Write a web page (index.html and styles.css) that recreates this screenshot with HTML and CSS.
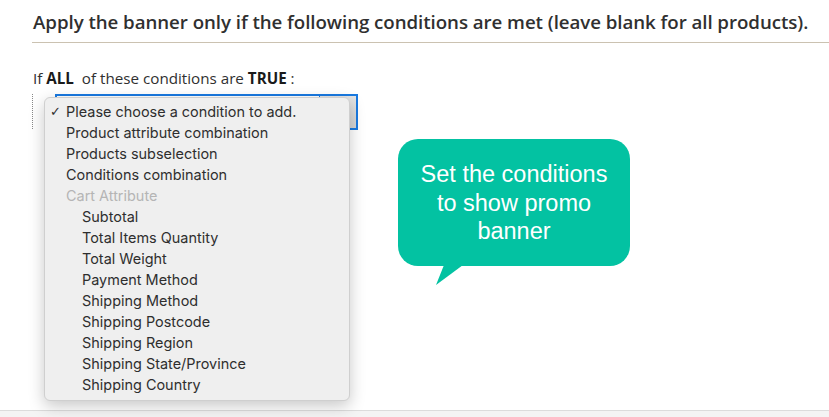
FILE: index.html
```html
<!DOCTYPE html>
<html lang="en">
<head>
    <meta charset="UTF-8">
    <title>Banner Conditions</title>
    <link rel="stylesheet" href="styles.css">
</head>
<body>
    <div class="page">
        <h2 class="section-title">Apply the banner only if the following conditions are met (leave blank for all products).</h2>

        <div class="conditions">
            <p class="rule-intro">If <b>ALL</b>&nbsp; of these conditions are <b>TRUE</b> :</p>
            <div class="rule-tree">
                <div class="select-box">
                    <span class="select-value"></span>
                    <span class="select-arrow"></span>
                </div>
            </div>

            <!-- Native dropdown menu, opened -->
            <ul class="dropdown">
                <li class="checked">Please choose a condition to add.</li>
                <li>Product attribute combination</li>
                <li>Products subselection</li>
                <li>Conditions combination</li>
                <li class="group">Cart Attribute</li>
                <li class="sub">Subtotal</li>
                <li class="sub">Total Items Quantity</li>
                <li class="sub">Total Weight</li>
                <li class="sub">Payment Method</li>
                <li class="sub">Shipping Method</li>
                <li class="sub">Shipping Postcode</li>
                <li class="sub">Shipping Region</li>
                <li class="sub">Shipping State/Province</li>
                <li class="sub">Shipping Country</li>
            </ul>

            <!-- Annotation callout -->
            <div class="callout">
                Set the conditions<br>to show promo<br>banner
                <svg class="callout-tail" width="30" height="22" viewBox="0 0 30 22">
                    <polygon points="8,0 27,0 0,20" fill="#03c2a2"/>
                </svg>
            </div>
        </div>
    </div>
    <div class="footer-bar"></div>
</body>
</html>
```

FILE: styles.css
```css
* {
    box-sizing: border-box;
    margin: 0;
    padding: 0;
}

body {
    font-family: 'Open Sans', sans-serif;
    color: #303030;
    background: #fff;
    height: 417px;
    overflow: hidden;
    display: flex;
    flex-direction: column;
}

.page {
    flex: 1;
    padding: 8px 0 0 32px;
}

.section-title {
    font-size: 18.7px;
    font-weight: 600;
    color: #303030;
    line-height: 28px;
    padding: 0 0 6px 1px;
    border-bottom: 1px solid #cbc2b1;
    letter-spacing: -0.05px;
    white-space: nowrap;
}

.conditions {
    position: relative;
    padding-top: 24px;
}

.rule-intro {
    font-size: 15.2px;
    line-height: 22px;
    color: #303030;
    padding-left: 1px;
}

.rule-intro b {
    font-weight: 700;
    color: #1a1a1a;
}

.rule-tree {
    margin-top: 5px;
    border-left: 1px dotted #888;
    padding-left: 22px;
    height: 35px;
}

.select-box {
    width: 303px;
    height: 36px;
    border: 2px solid #1979e0;
    display: flex;
}

.select-value {
    flex: 1;
    background: #fff;
}

.select-arrow {
    width: 37px;
    background: linear-gradient(#e4e4e4, #d4d4d4);
    border-left: 1px solid #1979e0;
}

.dropdown {
    position: absolute;
    left: 12px;
    top: 54px;
    width: 306px;
    height: 304px;
    list-style: none;
    background: #efefef;
    border: 1px solid #cfcfcf;
    border-radius: 6px;
    box-shadow: 0 5px 16px rgba(0, 0, 0, 0.22);
    padding-top: 3px;
    font-family: Inter, 'Noto Sans', sans-serif;
    font-size: 14.45px;
    color: #2e2e2e;
}

.dropdown li {
    height: 21px;
    line-height: 21px;
    padding-left: 21px;
    white-space: nowrap;
}

.dropdown li.checked {
    position: relative;
}

.dropdown li.checked::before {
    content: '✓';
    position: absolute;
    left: 5px;
    font-family: 'DejaVu Sans', sans-serif;
    font-size: 13px;
}

.dropdown li.group {
    color: #b5b5b5;
}

.dropdown li.sub {
    padding-left: 37px;
}

.callout {
    position: absolute;
    left: 366px;
    top: 96px;
    width: 232px;
    height: 127px;
    background: #03c2a2;
    border-radius: 20px;
    color: #fff;
    font-family: 'Liberation Sans', Arial, sans-serif;
    font-size: 23.5px;
    line-height: 28.5px;
    text-align: center;
    padding-top: 21px;
}

.callout-tail {
    position: absolute;
    left: 38px;
    top: 126px;
}

.footer-bar {
    height: 7px;
    border-top: 1px solid #dcdcdc;
    background: #f4f4f4;
}
```
